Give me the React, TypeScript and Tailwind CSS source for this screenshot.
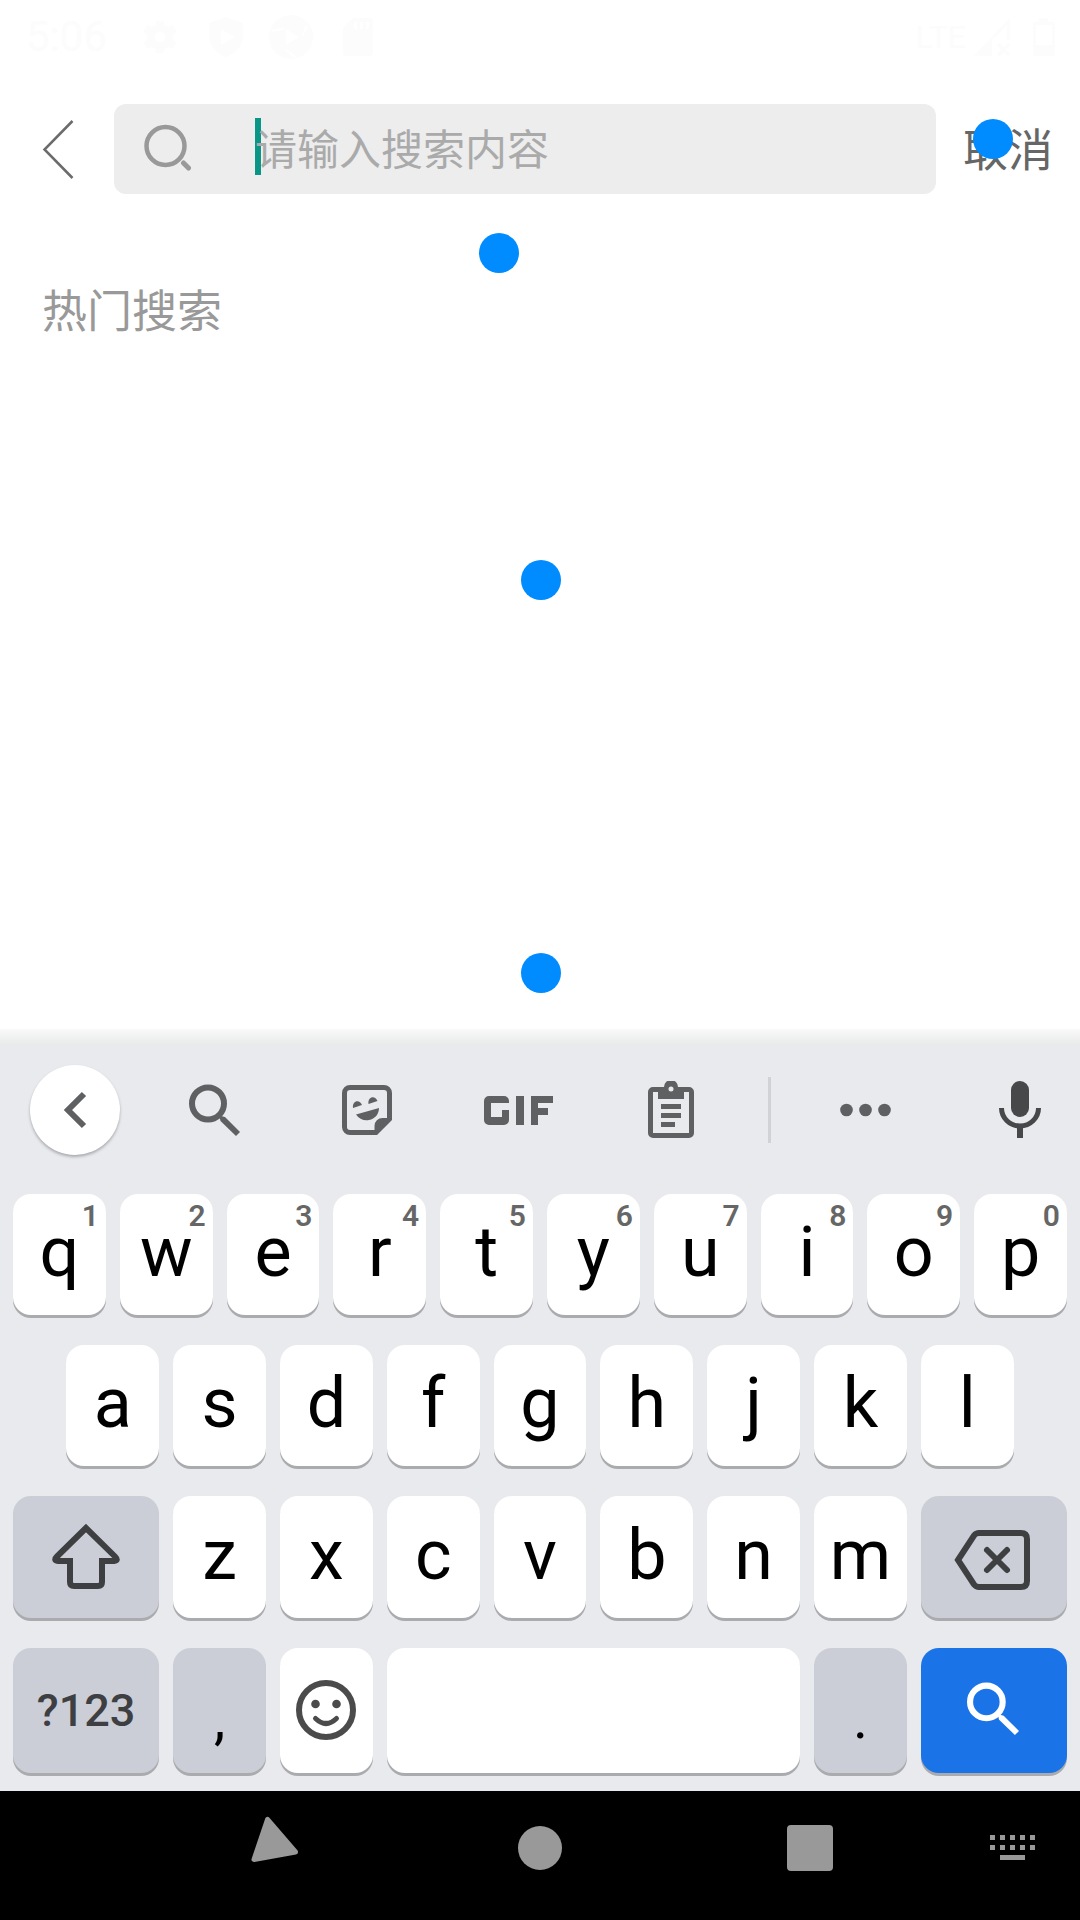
import React from "react";

type KeyProps = {
  label: string;
  children?: React.ReactNode;
  hint?: string;
  className?: string;
};

function Key({ label, children, hint, className = "col-span-2 bg-white" }: KeyProps) {
  return (
    <button
      type="button"
      aria-label={label}
      className={`relative mx-[7px] flex items-center justify-center rounded-[18px] shadow-[0_3px_0_#a9abae] ${className}`}
    >
      {children}
      {hint && (
        <span className="absolute right-[7px] top-[4px] text-[30px] font-semibold leading-9 text-[#666666]">{hint}</span>
      )}
    </button>
  );
}

function Letter({ char, hint }: { char: string; hint?: string }) {
  return (
    <Key label={char} hint={hint}>
      <span className="pb-[5px] text-[70px] leading-[116px] text-black">{char}</span>
    </Key>
  );
}

function SearchGlyph({ className }: { className: string }) {
  return (
    <svg viewBox="0 0 52 52" className={className} fill="none" stroke="currentColor" aria-hidden="true">
      <circle cx="19" cy="19.500" r="16" strokeWidth="6" />
      <path d="M30 31.500 36 33 51 48 47 52 31.500 37Z" fill="currentColor" stroke="none" />
    </svg>
  );
}

function StatusBar() {
  return (
    <header className="flex h-[74px] items-center justify-between pl-[26px] pr-6 text-[#fcfcfc]">
      <div className="flex items-center">
        <span className="w-[116px] text-[42px] leading-[74px]">5:06</span>
        <svg viewBox="0 0 40 40" className="mr-[31px] size-[36px]" fill="currentColor" aria-hidden="true">
          <path
            fillRule="evenodd"
            d="M16 2h8l1 5 4 2 5-2 4 7-4 4v4l4 4-4 7-5-2-4 2-1 5h-8l-1-5-4-2-5 2-4-7 4-4v-4l-4-4 4-7 5 2 4-2zM20 14a6 6 0 1 0 0 12 6 6 0 0 0 0-12z"
          />
        </svg>
        <svg viewBox="0 0 34 40" className="mr-[26px] h-[40px] w-[34px]" fill="currentColor" aria-hidden="true">
          <path fillRule="evenodd" d="M17 0 34 6v13c0 9-7 17-17 21C7 36 0 28 0 19V6zM12 12v16l14-8z" />
        </svg>
        <svg viewBox="0 0 44 44" className="mr-[30px] size-[44px]" fill="currentColor" aria-hidden="true">
          <path
            fillRule="evenodd"
            d="M22 0a22 22 0 1 1 0 44 22 22 0 0 1 0-44zM17 14v16l13-8zM2 17l1.500-3 12-1-1 2zM33 20l4-10 2 2-5 9zM18 34l10 8-3 1-8-7z"
          />
        </svg>
        <svg viewBox="0 0 30 38" className="h-[38px] w-[30px]" fill="currentColor" aria-hidden="true">
          <path fillRule="evenodd" d="M10 0h17a3 3 0 0 1 3 3v32a3 3 0 0 1-3 3H3a3 3 0 0 1-3-3V10zM11 4v7h3V4zm6 0v7h3V4zm6 0v7h3V4z" />
        </svg>
      </div>
      <div className="flex items-center">
        <span className="mr-2 text-[32px] leading-[74px]">LTE</span>
        <svg viewBox="0 0 36 38" className="h-[38px] w-[36px]" fill="currentColor" aria-hidden="true">
          <path fillRule="evenodd" d="M36 0v22h-3V7L18 22v16H0zM23 27l2-2 5 4 4-4 2 2-4 5 4 4-2 2-4-4-5 4-2-2 4-4z" />
        </svg>
        <svg viewBox="0 0 24 38" className="ml-[22px] h-[38px] w-[24px]" fill="currentColor" aria-hidden="true">
          <path fillRule="evenodd" d="M7 0h9v4h7v34H1V4h6zM4 7v20h16V7z" />
        </svg>
      </div>
    </header>
  );
}

function SearchHeader() {
  return (
    <div className="mt-[30px] flex h-[90px] items-center font-['Noto_Sans_CJK_SC',sans-serif]">
      <button type="button" aria-label="返回" className="flex h-full w-[114px] items-center pl-[42px]">
        <svg viewBox="0 0 32 60" className="h-[60px] w-[32px]" fill="none" stroke="#6b6b6b" strokeWidth="2.500" aria-hidden="true">
          <path d="M30.500 2 2.500 30.500 30.500 59" />
        </svg>
      </button>
      <div className="flex h-full min-w-0 flex-1 items-center rounded-[12px] bg-[#ededed] pb-[5px] pl-[29px]">
        <svg viewBox="0 0 48 48" className="size-[48px] shrink-0" fill="none" stroke="#999999" aria-hidden="true">
          <circle cx="22.500" cy="23" r="19" strokeWidth="4.500" />
          <path d="m40.500 40 5 5" strokeWidth="5" strokeLinecap="round" />
        </svg>
        <span className="ml-[64px] h-[57px] w-[6px] shrink-0 bg-[#0a9687]" />
        <input
          type="text"
          aria-label="搜索"
          placeholder="请输入搜索内容"
          className="-ml-[6px] h-full min-w-0 flex-1 bg-transparent text-[42px] text-[#666666] caret-transparent outline-none placeholder:text-[#aaaaaa]"
        />
      </div>
      <button type="button" className="mx-[27px] shrink-0 pb-[3px] text-[45px] leading-[60px] text-[#666666]">
        取消
      </button>
    </div>
  );
}

function Toolbar() {
  return (
    <div className="flex h-[132px] items-center pl-[30px] pr-[39px] text-[#5f6062]">
      <button
        type="button"
        aria-label="收起工具栏"
        className="flex size-[90px] items-center justify-center rounded-full bg-white shadow-[0_2px_3px_#a9abae]"
      >
        <svg viewBox="0 0 24 38" className="h-[38px] w-[24px]" fill="none" stroke="currentColor" strokeWidth="6" aria-hidden="true">
          <path d="M21 3 5 19 21 35" />
        </svg>
      </button>
      <div className="ml-[19px] mr-[21px] grid flex-1 grid-cols-4 items-center justify-items-center">
        <button type="button" aria-label="搜索">
          <SearchGlyph className="size-[52px]" />
        </button>
        <button type="button" aria-label="贴纸">
          <svg viewBox="0 0 50 50" className="size-[50px]" fill="currentColor" aria-hidden="true">
            <path
              fillRule="evenodd"
              d="M8 0h34a8 8 0 0 1 8 8v27L35 50H8a8 8 0 0 1-8-8V8a8 8 0 0 1 8-8zM8 5a3 3 0 0 0-3 3v34a3 3 0 0 0 3 3h24.500v-4a8 8 0 0 1 8-8h4.500V8a3 3 0 0 0-3-3z"
            />
            <path d="M14 29.500 37 23c0 6-4 11-10 12-5 1-10-1-13-5.500zM11 23c-1-8 7-9 9-3zM26.500 19c-1-8 7-9 9-3z" />
          </svg>
        </button>
        <button type="button" aria-label="GIF">
          <svg viewBox="0 0 70 29" className="h-[29px] w-[70px]" fill="currentColor" aria-hidden="true">
            <rect x="32" y="0" width="8" height="29" />
            <path d="M5 0h15a5 5 0 0 1 5 5v2H7v14h11v-7h7v10a5 5 0 0 1-5 5H5a5 5 0 0 1-5-5V5a5 5 0 0 1 5-5z" />
            <path d="M47 0h22v7H54v5h10v7H54v10h-7z" />
          </svg>
        </button>
        <button type="button" aria-label="剪贴板">
          <svg viewBox="0 0 46 58" className="h-[58px] w-[46px]" fill="currentColor" aria-hidden="true">
            <path
              fillRule="evenodd"
              d="M5 6h11a7 7 0 0 1 14 0h11a5 5 0 0 1 5 5v41a5 5 0 0 1-5 5H5a5 5 0 0 1-5-5V11a5 5 0 0 1 5-5zM5 11v41h36V11h-5v7H10v-7zM23 5.500a2.500 2.500 0 1 0 0 5 2.500 2.500 0 0 0 0-5z"
            />
            <path d="M13 23h20v5H13zM13 32h20v5H13zM13 41h14v5H13z" />
          </svg>
        </button>
      </div>
      <div className="h-[66px] w-[3px] bg-[#d0d2d5]" />
      <div className="flex w-[270px] items-center justify-between pl-[69px]">
        <button type="button" aria-label="更多">
          <svg viewBox="0 0 51 14" className="h-[14px] w-[51px]" fill="currentColor" aria-hidden="true">
            <circle cx="6.500" cy="7" r="6.300" />
            <circle cx="25.500" cy="7" r="6.300" />
            <circle cx="44.500" cy="7" r="6.300" />
          </svg>
        </button>
        <button type="button" aria-label="语音输入" className="pb-[3px] text-[#47484a]">
          <svg viewBox="0 0 42 58" className="h-[58px] w-[42px]" fill="none" stroke="currentColor" aria-hidden="true">
            <rect x="12" y="1" width="18" height="36" rx="9" fill="currentColor" stroke="none" />
            <path d="M2.500 28a18.500 18 0 0 0 37 0" strokeWidth="5" />
            <path d="M21 46v12" strokeWidth="6" />
          </svg>
        </button>
      </div>
    </div>
  );
}

function Keyboard() {
  return (
    <section aria-label="键盘" className="bg-[#e8eaed] pb-[18px] font-[Roboto,sans-serif]">
      <Toolbar />
      <div className="mt-[18px] grid grid-cols-20 grid-rows-[121px_121px_122px_125px] gap-y-[30px] px-[6px]">
        {"qwertyuiop".split("").map((c, i) => (
          <Letter key={c} char={c} hint={String((i + 1) % 10)} />
        ))}
        <span />
        {"asdfghjkl".split("").map((c) => (
          <Letter key={c} char={c} />
        ))}
        <span />
        <Key label="Shift" className="col-span-3 bg-[#cbced6] text-[#3e3f41]">
          <svg viewBox="0 0 68 68" className="size-[68px]" fill="none" stroke="currentColor" strokeWidth="6" aria-hidden="true">
            <path d="M34 5 5 33.500q-4 4 1 4.500H18V59q0 4 4 4H46q4 0 4-4V38H62q5-.5 1-4.500Z" />
          </svg>
        </Key>
        {"zxcvbnm".split("").map((c) => (
          <Letter key={c} char={c} />
        ))}
        <Key label="Backspace" className="col-span-3 bg-[#cbced6] pr-1 pt-1.5 text-[#3e3f41]">
          <svg viewBox="0 0 76 60" className="h-[60px] w-[76px]" fill="none" stroke="currentColor" strokeWidth="6" aria-hidden="true">
            <path d="M4 30 20 5.500Q22 3 25 3H67Q73 3 73 9V51Q73 57 67 57H25Q22 57 20 54.500Z" />
            <path d="M33 20 53 40M53 20 33 40" strokeLinecap="round" />
          </svg>
        </Key>
        <Key label="?123" className="col-span-3 bg-[#cbced6]">
          <span className="text-[45px] font-medium leading-[54px] text-[#3e3f42]">?123</span>
        </Key>
        <Key label="," className="col-span-2 bg-[#cbced6]">
          <span className="pt-[16px] text-[57px] leading-[68px] text-black">,</span>
        </Key>
        <Key label="Emoji" className="col-span-2 bg-white pb-0.5">
          <svg viewBox="0 0 60 60" className="size-[60px]" fill="none" stroke="#4b4b4b" strokeWidth="6" aria-hidden="true">
            <circle cx="30" cy="30" r="27" />
            <circle cx="19.500" cy="24" r="4.300" fill="#4b4b4b" stroke="none" />
            <circle cx="40.500" cy="24" r="4.300" fill="#4b4b4b" stroke="none" />
            <path d="M19.500 38.500q10.500 10 21 0" strokeWidth="5" strokeLinecap="round" />
          </svg>
        </Key>
        <Key label="Space" className="col-span-8 bg-white" />
        <Key label="." className="col-span-2 bg-[#cbced6]">
          <span className="pt-[16px] text-[57px] leading-[68px] text-black">.</span>
        </Key>
        <Key label="搜索" className="col-span-3 bg-[#1b73e8] pb-1 text-white">
          <SearchGlyph className="size-[53px]" />
        </Key>
      </div>
    </section>
  );
}

function NavigationBar() {
  return (
    <nav className="grid h-[129px] grid-cols-[1fr_2fr_2fr_2fr_1fr] items-center bg-black pb-[15px] text-[#999999]">
      <span />
      <button type="button" aria-label="返回" className="flex justify-center">
        <svg viewBox="0 0 64 64" className="size-[64px]" fill="currentColor" stroke="currentColor" strokeWidth="5" strokeLinejoin="round" aria-hidden="true">
          <path d="M29.500 3.500 16 43.500 57.500 36Z" />
        </svg>
      </button>
      <button type="button" aria-label="主屏幕" className="flex justify-center">
        <span className="size-[44px] rounded-full bg-[#999999]" />
      </button>
      <button type="button" aria-label="最近任务" className="flex justify-center">
        <span className="size-[46px] rounded-[4px] bg-[#999999]" />
      </button>
      <button type="button" aria-label="切换键盘" className="flex justify-center">
        <svg viewBox="0 0 46 26" className="h-[26px] w-[46px]" fill="currentColor" aria-hidden="true">
          <path d="M0 0h5v5H0zM10 0h5v5h-5zM20 0h5v5h-5zM30 0h5v5h-5zM40 0h5v5h-5zM0 10h5v5H0zM10 10h5v5h-5zM20 10h5v5h-5zM30 10h5v5h-5zM40 10h5v5h-5zM10 20h25v5H10z" />
        </svg>
      </button>
    </nav>
  );
}

const touches = [
  { x: 499, y: 253 },
  { x: 993, y: 139 },
  { x: 541, y: 580 },
  { x: 541, y: 973 },
];

export default function App() {
  return (
    <div className="relative flex min-h-screen flex-col bg-white font-[Roboto,'Noto_Sans_CJK_SC',sans-serif]">
      <StatusBar />
      <SearchHeader />
      <main className="flex-1 px-[42px] pt-[82px]">
        <h1 className="font-['Noto_Sans_CJK_SC',sans-serif] text-[45px] leading-[66px] text-[#999999]">热门搜索</h1>
      </main>
      <div className="h-[15px] bg-linear-to-b from-[#fafafa] to-[#e9eaea]" />
      <Keyboard />
      <NavigationBar />
      {touches.map((t) => (
        <span
          key={`${t.x}-${t.y}`}
          className="pointer-events-none absolute size-[40px] -translate-1/2 rounded-full bg-[#008cff]"
          style={{ left: t.x, top: t.y }}
        />
      ))}
    </div>
  );
}
